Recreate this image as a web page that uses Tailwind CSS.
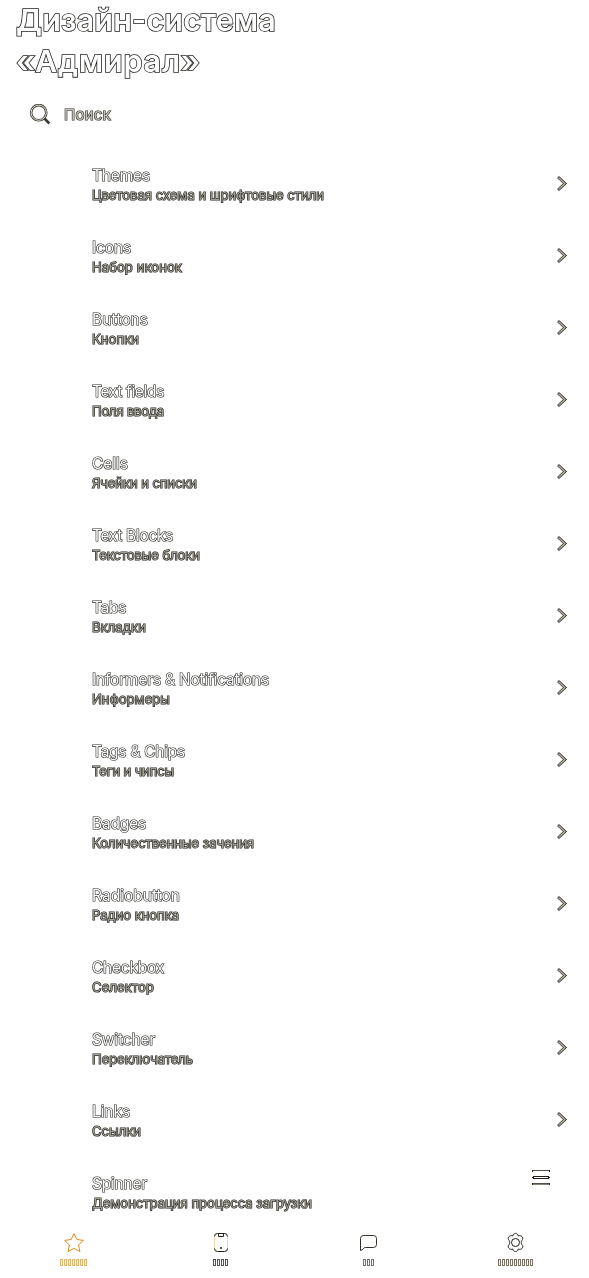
<!DOCTYPE html>
<html lang="ru">
<head>
<meta charset="utf-8">
<title>Дизайн-система «Адмирал»</title>
<script src="https://cdn.jsdelivr.net/npm/@tailwindcss/browser@4"></script>
</head>
<body class="bg-white">
<div class="flex h-[1278px] w-[589px] flex-col overflow-hidden font-['Inter','Liberation_Sans',sans-serif]">
  <h1 class="h-[83px] pl-4 text-[30.500px] leading-[42px] font-semibold whitespace-nowrap text-white will-change-transform [paint-order:stroke] [-webkit-text-stroke:1.600px_#1c1b18]"><span class="-mt-px block" data-w="260">Дизайн-система</span><span class="-mt-px block" data-w="185">«Адмирал»</span></h1>
  <div class="flex h-[64px] items-center pl-[29px] will-change-transform">
    <svg class="h-[22px] w-[22px]" viewBox="0 0 22 22" fill="none"><g stroke="#3d3b30" stroke-width="2.600"><circle cx="9.7" cy="8.7" r="7.6"/><path d="M15 14l5.300 5.500"/></g><circle cx="9.7" cy="8.7" r="7.6" stroke="#e6e4dc" stroke-width="1"/></svg>
    <span class="ml-[13px] text-[15px] text-[#c9c7bd] [paint-order:stroke] [-webkit-text-stroke:1.200px_#22201a]" data-w="47">Поиск</span>
  </div>
  <main id="list" class="h-[1075px] shrink-0 will-change-transform"></main>
  <nav class="relative flex h-[56px] shrink-0">
    <div class="flex flex-1 flex-col items-center pt-[10px]">
      <svg class="h-[22px] w-[22px]" viewBox="0 0 22 22" fill="none" stroke="#d98e1f" stroke-linejoin="round"><path d="M11 1.700l2.800 5.800 6.600.9-4.800 4.500 1.300 6.700-5.900-3.200-5.900 3.200 1.300-6.700-4.800-4.500 6.600-.9z"/></svg>
      <div class="mt-[5px] flex gap-px text-[#dfb374]" data-n="7"></div>
    </div>
    <div class="flex flex-1 flex-col items-center pt-[10px]">
      <svg class="h-[22px] w-[22px]" viewBox="0 0 22 22" fill="none"><rect x="4.500" y="1.500" width="13" height="18" rx="3" stroke="#efd6a8"/><path d="M4.500 4.500q0-3 3-3h7q3 0 3 3M4.500 16.500q0 3 3 3h7q3 0 3-3" stroke="#22201e"/><path d="M8.500 2v2.500h5V2" stroke="#22201e"/><path d="M10 15h2v2h-2z" fill="#555"/></svg>
      <div class="mt-[5px] flex gap-px text-[#58534a]" data-n="4"></div>
    </div>
    <div class="flex flex-1 flex-col items-center pt-[10px]">
      <svg class="h-[22px] w-[22px]" viewBox="0 0 22 22" fill="none" stroke="#332f26"><path d="M3.500 18.500V6.500q0-3 3-3h10q3 0 3 3v6q0 3-3 3H8.500q-1.500 0-2.300 1.300-1 1.500-2.700 1.700z"/></svg>
      <div class="mt-[5px] flex gap-px text-[#777064]" data-n="3"></div>
    </div>
    <div class="flex flex-1 flex-col items-center pt-[10px]">
      <svg class="h-[22px] w-[22px]" viewBox="0 0 22 22" fill="none" stroke="#1e1b16"><path d="M8.700 4C9.100.6 13.900.6 14.300 4c3-1.500 6.200 2.200 3.500 4.500-.7 1-.7 3 0 4 2.700 2.300-.5 6-3.500 4.500-.4 3.400-5.200 3.400-5.600 0-3 1.500-6.200-2.200-3.500-4.500.7-1 .7-3 0-4C2.500 6.200 5.700 2.500 8.700 4z"/><circle cx="11.500" cy="10.500" r="4"/></svg>
      <div class="mt-[5px] flex gap-px text-[#777064]" data-n="9"></div>
    </div>
    <svg class="absolute -top-[54px] left-[531px] h-[20px] w-[20px]" viewBox="0 0 20 20" fill="none"><path d="M1 2.500h18M1 15.500h18" stroke="#554e44"/><path d="M1 16.500h18" stroke="#8a8377"/><rect x="2.500" y="8.500" width="15" height="2" stroke="#22201e" fill="#fff"/><path d="M1 2h1v2H1zM18 2h1v2h-1zM1 9h1v1H1zM18 9h1v1h-1zM1 15h1v2H1zM18 15h1v2h-1z" fill="#22201e"/></svg>
  </nav>
</div>
<script>
const rows = [
  ['Themes','Цветовая схема и шрифтовые стили',58,232],
  ['Icons','Набор иконок',39,90],
  ['Buttons','Кнопки',56,47],
  ['Text fields','Поля ввода',72,72],
  ['Cells','Ячейки и списки',36,105],
  ['Text Blocks','Текстовые блоки',81,108],
  ['Tabs','Вкладки',34,54],
  ['Informers & Notifications','Информеры',177,78],
  ['Tags & Chips','Теги и чипсы',93,82],
  ['Badges','Количественные зачения',54,162],
  ['Radiobutton','Радио кнопка',88,87],
  ['Checkbox','Селектор',72,62],
  ['Switcher','Переключатель',63,101],
  ['Links','Ссылки',38,49],
  ['Spinner','Демонстрация процесса загрузки',55,220]
];
document.getElementById('list').innerHTML = rows.map(([t,s,tw,sw],i) => `
  <div class="flex h-[72px] items-center justify-between pr-[20px] pl-[92px]">
    <div class="pt-[4px] whitespace-nowrap">
      <div class="-mb-px pt-px text-[15.500px] leading-5 text-white [paint-order:stroke] [-webkit-text-stroke:1.200px_#1c1b17]"><span data-w="${tw}">${t.replace('&','&amp;')}</span></div>
      <div class="text-[13px] leading-5 text-[#a19f94] [paint-order:stroke] [-webkit-text-stroke:1.200px_#181712]"><span data-w="${sw}">${s}</span></div>
    </div>
    ${i < 14 ? '<svg class="h-4 w-[14px]" viewBox="0 0 14 16" fill="none"><path d="M3 2L10 8.500l-7 6.500" stroke="#36332c" stroke-width="2.800"/><path d="M3.500 2.500L9.800 8.500 3.500 14.500" stroke="#b4b0a2" stroke-width="1.300"/></svg>' : ''}
  </div>`).join('');
document.querySelectorAll('[data-n]').forEach(e => {
  e.innerHTML = '<i class="h-[7px] w-[3px] border border-current"></i>'.repeat(+e.dataset.n);
});
const fit = () => document.querySelectorAll('[data-w]').forEach(e => {
  e.style.letterSpacing = '0px';
  const r = document.createRange();
  r.selectNodeContents(e.firstChild);
  const w = r.getBoundingClientRect().width;
  e.style.letterSpacing = ((+e.dataset.w - w) / e.textContent.length) + 'px';
});
window.addEventListener('load', () => { fit(); requestAnimationFrame(fit); document.fonts.ready.then(fit); });
</script>
</body>
</html>
